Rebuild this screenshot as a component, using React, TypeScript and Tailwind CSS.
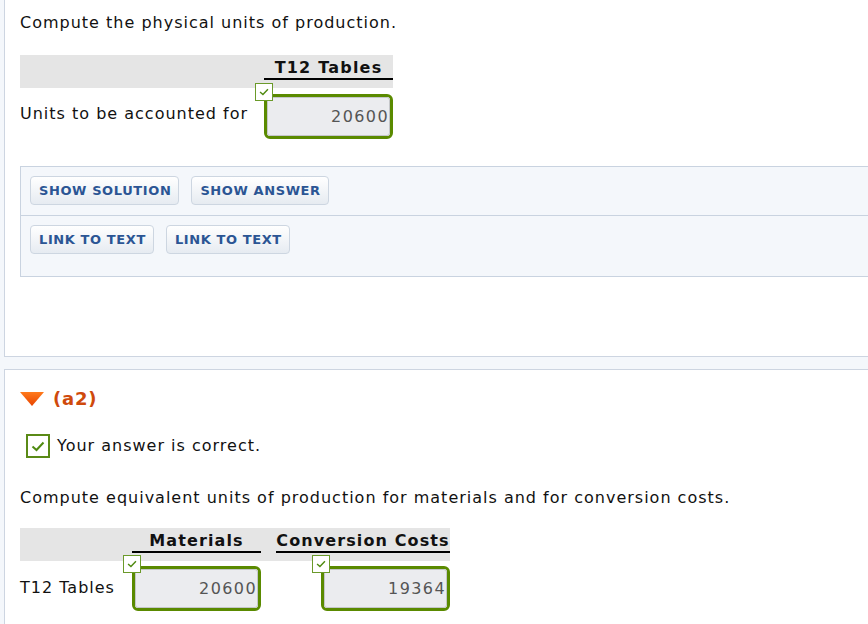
import React from "react";

const font = { fontFamily: '"DejaVu Sans", Verdana, sans-serif' };

function Tick({ size = 18, thick = false }: { size?: number; thick?: boolean }) {
  return (
    <span
      className={
        thick
          ? "flex h-[24px] w-[24px] items-center justify-center border-2 border-[#5a8a16] bg-white"
          : "flex h-[18px] w-[18px] items-center justify-center border border-[#6b9a2a] bg-white"
      }
    >
      <svg width={size === 18 ? 10 : 14} height={size === 18 ? 8 : 11} viewBox="0 0 14 11" fill="none">
        <path d="M1.5 5.5 L5.5 9 L12.5 1.5" stroke="#4f8a10" strokeWidth="2" />
      </svg>
    </span>
  );
}

function AnswerBox({ value }: { value: string }) {
  return (
    <div className="relative">
      <div className="absolute -left-[9px] -top-[11px] z-10">
        <Tick />
      </div>
      <div className="h-[45px] w-[129px] rounded-[6px] border-[3px] border-[#5a8a00] bg-white">
        <div className="flex h-full items-center justify-end rounded-[3px] border border-[#c4c6c9] bg-[#ebecef] pr-0 text-[16px] tracking-[1.4px] text-[#555]">
          {value}
        </div>
      </div>
    </div>
  );
}

function Btn({ children }: { children: React.ReactNode }) {
  return (
    <button
      className="h-[29px] rounded-[4px] border border-[#cdd6e1] bg-gradient-to-b from-white to-[#e6ebf1] pl-[8px] pr-[7px] text-[13px] font-bold tracking-[0.6px] text-[#2b5594]"
      style={{ fontFamily: '"DejaVu Sans", Verdana, sans-serif' }}
    >
      {children}
    </button>
  );
}

export default function App() {
  return (
    <div className="flex h-[624px] w-[868px] flex-col overflow-hidden bg-[#f4f7fb] pl-[4px] text-[#111]" style={font}>
      <section className="w-[900px] border-b border-l border-[#cdd5e1] bg-white pb-[79px] pl-[15px] pt-[13px] tracking-[1px]">
        <p className="text-[16px] leading-[20px]">Compute the physical units of production.</p>

        <div className="mt-[22px] w-[373px]">
          <div className="flex bg-[#e5e5e5] pb-[8px] pt-[2px]">
            <div className="w-[244px]" />
            <div className="w-[129px] border-b-2 border-black text-center text-[16px] font-bold leading-[21px] tracking-[1.2px]">
              T12 Tables
            </div>
          </div>
          <div className="mt-[6px] flex">
            <div className="w-[244px] pt-[10px] text-[16px] leading-[20px]">Units to be accounted for</div>
            <AnswerBox value="20600" />
          </div>
        </div>

        <div className="mt-[27px] border border-r-0 border-[#c9d3e0] bg-[#f4f7fb] tracking-normal">
          <div className="flex gap-[12px] border-b border-[#c9d3e0] px-[9px] pb-[10px] pt-[9px]">
            <Btn>SHOW SOLUTION</Btn>
            <Btn>SHOW ANSWER</Btn>
          </div>
          <div className="flex gap-[12px] px-[9px] pb-[22px] pt-[9px]">
            <Btn>LINK TO TEXT</Btn>
            <Btn>LINK TO TEXT</Btn>
          </div>
        </div>
      </section>

      <section className="mt-[12px] w-[900px] flex-1 border-l border-t border-[#cdd5e1] bg-white pl-[15px] pt-[17px] tracking-[1px]">
        <div className="flex items-center gap-[9px]">
          <svg width="24" height="14" viewBox="0 0 24 14">
            <defs>
              <linearGradient id="tri" x1="0" y1="0" x2="0" y2="1">
                <stop offset="0" stopColor="#ff7a1c" />
                <stop offset="1" stopColor="#e84400" />
              </linearGradient>
            </defs>
            <path d="M0 0 H24 L12 14 Z" fill="url(#tri)" />
          </svg>
          <span className="text-[18px] font-bold leading-[24px] tracking-[0.8px] text-[#cf4a0c]">(a2)</span>
        </div>

        <div className="ml-[6px] mt-[23px] flex items-center gap-[7px]">
          <Tick size={24} thick />
          <span className="text-[16px] leading-[20px]">Your answer is correct.</span>
        </div>

        <p className="mt-[30px] text-[16px] leading-[20px]">
          Compute equivalent units of production for materials and for conversion costs.
        </p>

        <div className="mt-[20px] w-[430px]">
          <div className="flex bg-[#e5e5e5] pb-[8px] pt-[2px]">
            <div className="w-[112px]" />
            <div className="w-[129px] border-b-2 border-black text-center text-[16px] font-bold leading-[21px] tracking-[1.1px]">
              Materials
            </div>
            <div className="ml-[15px] w-[174px] border-b-2 border-black text-center text-[16px] font-bold leading-[21px] tracking-[1.1px]">
              Conversion Costs
            </div>
          </div>
          <div className="mt-[5px] flex">
            <div className="w-[112px] pt-[12px] text-[16px] leading-[20px]">T12 Tables</div>
            <AnswerBox value="20600" />
            <div className="ml-[15px] flex w-[174px] justify-end">
              <AnswerBox value="19364" />
            </div>
          </div>
        </div>
      </section>
    </div>
  );
}
